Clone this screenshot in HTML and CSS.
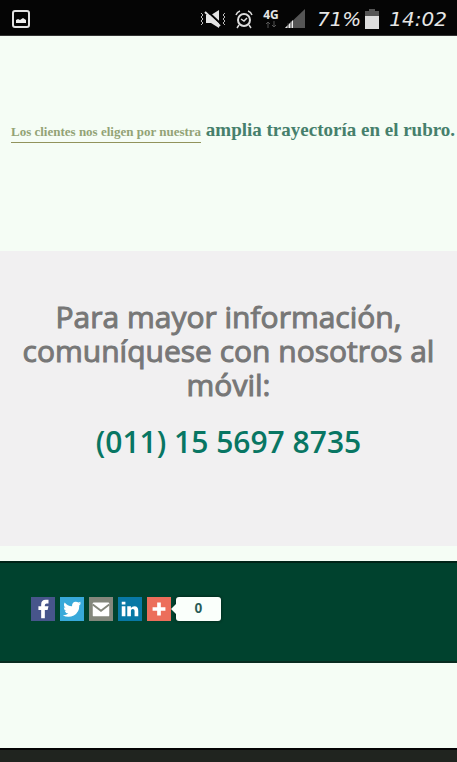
FILE: index.html
```html
<!DOCTYPE html>
<html lang="es">
<head>
<meta charset="utf-8">
<meta name="viewport" content="width=device-width, initial-scale=1">
<title>Contacto</title>
<link rel="stylesheet" href="styles.css">
</head>
<body>
<header class="status">
  <svg class="shot" width="20" height="20" viewBox="0 0 20 20" aria-hidden="true"><rect x="2" y="2" width="16" height="16" rx="2" fill="none" stroke="#e4e4e4" stroke-width="2"/><path d="M5 14v-3l2-1 2 1 3-2 3 2v3z" fill="#eee"/></svg>
  <div class="indicators">
    <svg width="28" height="20" viewBox="0 0 28 20" aria-hidden="true"><path d="M7 6h5l8-5v18l-8-5H7z" fill="#e4e4e4"/><path d="M7 1l15 14" stroke="#050505" stroke-width="2"/><path d="M6 3l15 14" stroke="#e4e4e4" stroke-width="2"/><path d="M2 4l2 2-2 2 2 2-2 2 2 2-2 2M26 4l-2 2 2 2-2 2 2 2-2 2 2 2" fill="none" stroke="#bbb"/></svg>
    <svg width="18" height="20" viewBox="0 0 18 20" aria-hidden="true"><g fill="none" stroke="#ddd" stroke-width="2"><circle cx="9" cy="11" r="6"/><path d="M1 6q1-3 4-4M13 2q3 1 4 4M4 16l-2 3M14 16l2 3" stroke-width="1.5"/><path d="M6 10l3 2 3-3" stroke-width="1.5"/></g></svg>
    <div class="network"><span>4G</span><svg width="10" height="7" viewBox="0 0 10 7" aria-hidden="true"><path d="M2 7V1M0 3l2-2 2 2M8 0v6M6 4l2 2 2-2" fill="none" stroke="#555"/></svg></div>
    <svg width="20" height="20" viewBox="0 0 20 20" aria-hidden="true"><path d="M0 19L20 0v19z" fill="#555"/><path d="M0 19l8-8v8z" fill="#eee"/><path d="M3 14v5M6 12v7" stroke="#333"/></svg>
    <span class="digits percent">71%</span>
    <svg width="14" height="20" viewBox="0 0 14 20" aria-hidden="true"><path d="M4 0h6v2h4v5H0V2h4z" fill="#555"/><path d="M0 7h14v13H0z" fill="#ddd"/></svg>
    <span class="digits clock">14:02</span>
  </div>
</header>
<main>
  <p class="claim"><a class="why" href="#contacto">Los clientes nos eligen por nuestra</a> <strong>amplia trayectoría en el rubro.</strong></p>
  <section class="contact" id="contacto">
    <h1>Para mayor información, comuníquese con nosotros al móvil:</h1>
    <a class="phone" href="tel:0111556978735">(011) 15 5697 8735</a>
  </section>
</main>
<footer class="share">
  <a class="icon facebook" href="#facebook" aria-label="Facebook"><svg viewBox="0 0 24 24"><path d="M10 22v-9H7V9h3V7q0-5 5-5h3v4h-2q-2 0-2 2v1h4l-1 4h-3v9z" fill="#fff"/></svg></a>
  <a class="icon twitter" href="#twitter" aria-label="Twitter"><svg viewBox="0 0 24 24"><path d="M22 6l-2 2q0 8-6 11-6 3-12 0 4 0 6-2-3 0-4-3h2q-3-1-3-4l2 1Q2 8 4 5q3 4 8 4 0-5 4-5 2 0 3 1l3-1-2 2z" fill="#fff"/></svg></a>
  <a class="icon mail" href="#email" aria-label="Correo"><svg viewBox="0 0 24 24"><rect x="3" y="5" width="18" height="15" rx="1" fill="#fff"/><path d="M3 7l9 7 9-7" fill="none" stroke="#84877c" stroke-width="2"/></svg></a>
  <a class="icon linkedin" href="#linkedin" aria-label="LinkedIn"><svg viewBox="0 0 24 24"><path d="M3 9h4v11H3zM3 4h4v3H3zM9 9h4v2q1-2 4-2 4 0 4 5v6h-4v-6q0-2-2-2t-2 2v6H9z" fill="#fff"/></svg></a>
  <a class="icon more" href="#compartir" aria-label="Compartir"><svg viewBox="0 0 24 24"><path d="M10 5h4v5h5v4h-5v5h-4v-5H5v-4h5z" fill="#fff"/></svg></a>
  <span class="count">0</span>
</footer>
<div class="bottom"></div>
</body>
</html>
```
FILE: styles.css
```css
* { box-sizing: border-box; }
body {
  margin: 0;
  min-height: 100vh;
  display: flex;
  flex-direction: column;
  background: #f5fdf5;
  font-family: "Open Sans", "Noto Sans", sans-serif;
}
svg { display: block; flex: none; }
a { text-decoration: none; }

.status {
  display: flex;
  align-items: center;
  justify-content: space-between;
  height: 36px;
  padding: 2px 10px 0 11px;
  background: #050505;
  border-bottom: 1px solid #333;
  color: #e6e6e6;
}
.indicators { display: flex; align-items: center; }
.indicators svg { margin-right: 8px; }
.network {
  display: flex;
  flex-direction: column;
  align-items: center;
  width: 20px;
  margin-right: 4px;
  font: bold 12px/12px "Open Sans", sans-serif;
}
.network svg { margin: 0; }
.digits { font: italic 20px/24px "DejaVu Sans", sans-serif; white-space: nowrap; }
.percent { margin: 0 4px; }
.clock { margin-left: 2px; }

.claim {
  margin: 0;
  padding: 80px 0 107px 11px;
  font: bold 19px/28px "Liberation Serif", serif;
  color: #46806c;
  white-space: nowrap;
}
.why {
  display: inline-block;
  font-size: 13px;
  line-height: 20px;
  font-weight: 700;
  color: #93a376;
  border-bottom: 1px solid #91935c;
}

.contact {
  padding: 49px 16px 84px;
  background: #f1f0f1;
  text-align: center;
}
h1 {
  margin: 0 0 20px;
  font-size: 30px;
  line-height: 34px;
  font-weight: 500;
  color: #777;
  -webkit-text-stroke: 1px #777;
}
.phone {
  display: block;
  font-size: 30px;
  line-height: 40px;
  font-weight: 600;
  color: #087663;
}

.share {
  display: flex;
  align-items: center;
  gap: 5px;
  margin-top: 15px;
  padding: 34px 31px 40px;
  background: #00422e;
  border-top: 2px solid #002317;
  border-bottom: 2px solid #092c20;
}
.icon { width: 24px; height: 24px; padding: 1px; }
.facebook { background: #47558b; }
.twitter { background: #38a9da; }
.mail { background: #84877c; }
.linkedin { background: #0878a5; }
.more { background: #ec6e5b; }
.count {
  position: relative;
  width: 45px;
  height: 24px;
  border-radius: 3px;
  background: #fafffb;
  box-shadow: 0 0 3px #001c12;
  font: bold 14px/23px "Liberation Sans", sans-serif;
  color: #285b57;
  text-align: center;
}
.count::before {
  content: "";
  position: absolute;
  left: -5px;
  top: 7px;
  border: 5px solid transparent;
  border-left: 0;
  border-right-color: #fafffb;
}
.bottom {
  height: 14px;
  margin-top: auto;
  background: #20241f;
  border-top: 2px solid #050505;
}
```
